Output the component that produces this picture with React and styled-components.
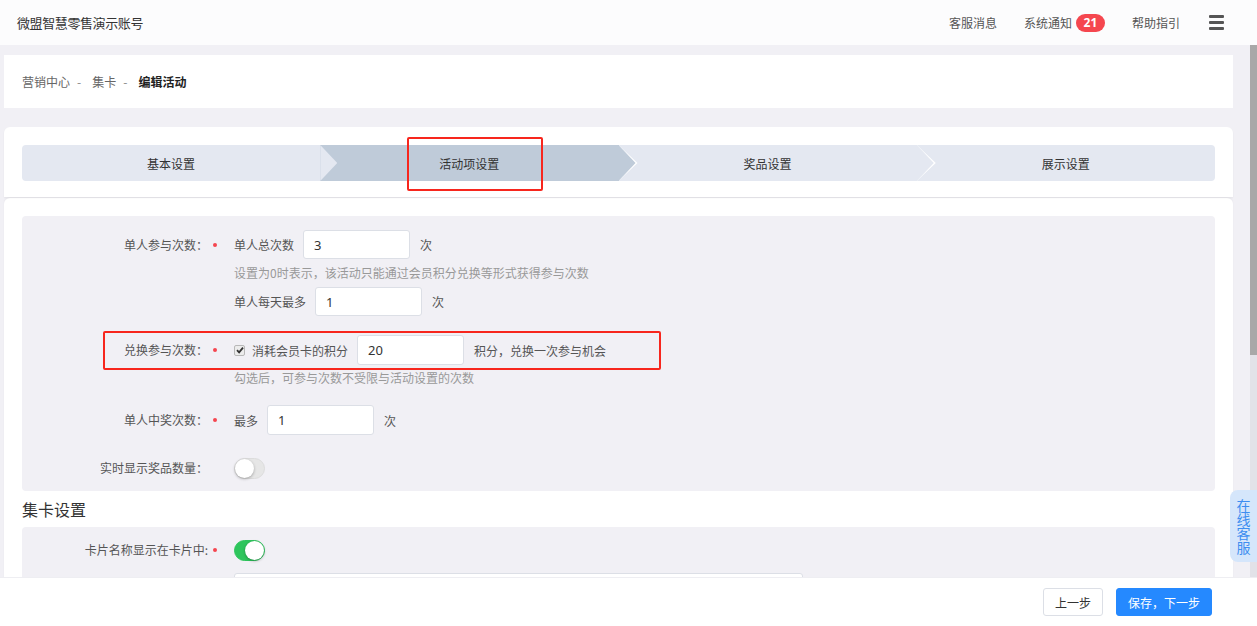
import React from 'react'
import styled, { createGlobalStyle } from 'styled-components'

const GlobalStyle = createGlobalStyle`
  html, body {
    margin: 0;
    padding: 0;
    height: 100%;
    overflow: hidden;
  }
  body {
    font-family: "Noto Sans CJK SC", "Noto Sans", sans-serif;
    font-size: 12px;
    color: #333;
    background: #f1f0f5;
  }
  * { box-sizing: border-box; }
`

const Shell = styled.div`
  display: flex;
  flex-direction: column;
  height: 100vh;
`
const Header = styled.header`
  flex: 0 0 45px;
  display: flex;
  align-items: center;
  justify-content: space-between;
  padding: 0 33px 0 17px;
  background: #fcfcfd;
`
const Brand = styled.div`
  font-size: 13px;
  color: #333;
  letter-spacing: -0.4px;
`
const NavLinks = styled.nav`
  display: flex;
  align-items: center;
`
const NavItem = styled.span`
  display: flex;
  align-items: center;
  margin-left: 27px;
  color: #555;
  font-size: 12px;
`
const Badge = styled.span`
  margin-left: 4px;
  height: 18px;
  min-width: 29px;
  padding: 0 6px;
  border-radius: 9px;
  background: #f5474f;
  color: #fff;
  font-family: "Noto Sans", sans-serif;
  font-weight: 700;
  font-size: 12px;
  line-height: 18px;
  text-align: center;
`
const Burger = styled.span`
  margin-left: 29px;
  display: flex;
  flex-direction: column;
  gap: 3px;
  width: 15px;
  span {
    height: 3px;
    background: #555;
    border-radius: 1px;
  }
`

const Scroller = styled.main`
  position: relative;
  flex: 1;
  overflow: hidden;
`
const Rail = styled.div`
  position: absolute;
  top: 0;
  right: 0;
  bottom: 0;
  width: 7px;
  background: #e2e2e8;
  z-index: 4;
  &::before {
    content: '';
    display: block;
    height: 310px;
    background: #a8a8a8;
  }
`
const Page = styled.div`
  min-height: 1089px;
  padding: 10px 24px 60px 4px;
`
const Crumbs = styled.div`
  height: 53px;
  display: flex;
  align-items: center;
  padding-left: 18px;
  background: #fff;
  color: #666;
  margin-bottom: 19px;
`
const Sep = styled.span`
  margin: 0 11px 0 7px;
  color: #888;
`
const Current = styled.span`
  color: #222;
  font-weight: 700;
`

const StepsCard = styled.div`
  position: relative;
  background: #fff;
  border-radius: 6px 6px 0 0;
  padding: 18px 18px 16px;
  box-shadow: 0 1px 2px rgba(0, 0, 0, 0.05);
`
const StepBar = styled.div`
  display: flex;
  height: 36px;
  border-radius: 4px;
  overflow: hidden;
`
const Step = styled.div`
  position: relative;
  flex: 1;
  display: flex;
  align-items: center;
  justify-content: center;
  background: ${props => props.$active ? '#bfcbd9' : '#e4e8f1'};
  color: #333;
  font-size: 12px;
  &::before {
    content: ${props => props.$last ? 'none' : "''"};
    position: absolute;
    z-index: 1;
    top: 0;
    right: -19px;
    width: 19px;
    height: 36px;
    background: ${props => props.$line ? '#fff' : 'transparent'};
    clip-path: polygon(0 0, 100% 50%, 0 100%);
  }
  &::after {
    content: ${props => props.$last ? 'none' : "''"};
    position: absolute;
    z-index: 2;
    top: 0;
    right: -17px;
    width: 17px;
    height: 36px;
    background: ${props => props.$active ? '#bfcbd9' : '#e4e8f1'};
    clip-path: polygon(0 0, 100% 50%, 0 100%);
  }
  span { position: relative; z-index: 3; }
`
const Highlight = styled.div`
  position: absolute;
  left: ${props => props.$x}px;
  top: ${props => props.$y}px;
  width: ${props => props.$w}px;
  height: ${props => props.$h}px;
  border: 2px solid #f7261d;
  border-radius: 2px;
  pointer-events: none;
  z-index: 5;
`

const FormCard = styled.div`
  margin-top: 1px;
  background: #fff;
  border-radius: 6px 6px 0 0;
  padding: 18px 18px 40px;
  box-shadow: 0 -1px 2px rgba(0, 0, 0, 0.04);
`
const Section = styled.section`
  background: #f1f0f5;
  border-radius: 4px;
  padding: ${props => props.$pad || '14px 0 12px'};
`
const Row = styled.div`
  position: relative;
  display: flex;
  align-items: flex-start;
  margin-top: ${props => props.$mt || 0}px;
`
const Label = styled.div`
  width: 186px;
  height: ${props => props.$h || 29}px;
  line-height: ${props => props.$h || 29}px;
  text-align: right;
  color: #555;
  white-space: nowrap;
`
const Dot = styled.div`
  width: 26px;
  height: ${props => props.$h || 29}px;
  display: flex;
  align-items: center;
  &::before {
    content: ${props => props.$on ? "''" : 'none'};
    margin-left: 5px;
    width: 4px;
    height: 4px;
    border-radius: 50%;
    background: #f5454f;
  }
`
const Field = styled.div`
  display: flex;
  flex-direction: column;
`
const Line = styled.div`
  display: flex;
  align-items: center;
  height: ${props => props.$h || 29}px;
  color: #555;
`
const TextInput = styled.input`
  width: 107px;
  height: ${props => props.$h || 29}px;
  margin: 0 10px 0 9px;
  padding: 0 10px;
  border: 1px solid #dcdfe6;
  border-radius: 3px;
  background: #fff;
  font-family: "Noto Sans", sans-serif;
  font-size: 13px;
  color: #333;
  outline: none;
`
const Hint = styled.div`
  height: ${props => props.$h || 28}px;
  line-height: ${props => props.$h || 28}px;
  color: #999;
`
const Check = styled.span`
  width: 11px;
  height: 11px;
  margin-right: 7px;
  border: 1px solid #b8b8b8;
  border-radius: 2px;
  background: #ececec;
  display: flex;
  align-items: center;
  justify-content: center;
`
const Toggle = styled.span`
  position: relative;
  width: 31px;
  height: 21px;
  border-radius: 11px;
  background: ${props => props.$on ? '#2ec55c' : '#e6e6e6'};
  border: 1px solid ${props => props.$on ? '#2ec55c' : '#dcdcdc'};
  &::after {
    content: '';
    position: absolute;
    top: 0;
    left: ${props => props.$on ? '10px' : '0'};
    width: 19px;
    height: 19px;
    border-radius: 50%;
    background: #fff;
    box-shadow: 0 1px 3px rgba(0, 0, 0, 0.3);
  }
`
const Heading = styled.h3`
  margin: 0;
  height: 36px;
  line-height: 36px;
  font-size: 16px;
  font-weight: 400;
  color: #333;
`
const WideInput = styled.div`
  width: 569px;
  height: 32px;
  background: #fff;
  border: 1px solid #dcdfe6;
  border-radius: 3px;
`

const Footer = styled.footer`
  position: fixed;
  left: 0;
  right: 0;
  bottom: 0;
  height: 49px;
  display: flex;
  align-items: center;
  justify-content: flex-end;
  gap: 13px;
  padding-right: 45px;
  background: #fff;
  border-top: 1px solid #eeeef2;
  z-index: 10;
`
const Button = styled.button`
  height: 28px;
  padding: 0 11px;
  border-radius: 3px;
  border: 1px solid ${props => props.$primary ? '#2589ff' : '#dcdfe6'};
  background: ${props => props.$primary ? '#2589ff' : '#fff'};
  color: ${props => props.$primary ? '#fff' : '#333'};
  font-family: "Noto Sans CJK SC", sans-serif;
  font-size: 12px;
  cursor: pointer;
`
const ServiceTab = styled.div`
  position: fixed;
  right: 0;
  top: 490px;
  width: 27px;
  height: 72px;
  padding-top: 9px;
  border-radius: 8px 0 0 8px;
  background: #d5e6fb;
  color: #3d8ef0;
  font-size: 14px;
  line-height: 14px;
  writing-mode: vertical-lr;
  display: flex;
  align-items: center;
  z-index: 11;
`

const steps = ['基本设置', '活动项设置', '奖品设置', '展示设置']

export default function App() {
  const active = 1
  return (
    <Shell>
      <GlobalStyle />
      <Header>
        <Brand>微盟智慧零售演示账号</Brand>
        <NavLinks>
          <NavItem>客服消息</NavItem>
          <NavItem>系统通知<Badge>21</Badge></NavItem>
          <NavItem>帮助指引</NavItem>
          <Burger><span /><span /><span /></Burger>
        </NavLinks>
      </Header>
      <Scroller>
        <Page>
          <Crumbs>
            营销中心<Sep>-</Sep>集卡<Sep>-</Sep><Current>编辑活动</Current>
          </Crumbs>
          <StepsCard>
            <StepBar>
              {steps.map((s, i) => (
                <Step
                  key={s}
                  $active={i === active}
                  $last={i === steps.length - 1}
                  $line={i + 1 !== active}
                >
                  <span>{s}</span>
                </Step>
              ))}
            </StepBar>
            <Highlight $x={403} $y={10} $w={136} $h={54} />
          </StepsCard>
          <FormCard>
            <Section>
              <Row>
                <Label>单人参与次数：</Label>
                <Dot $on />
                <Field>
                  <Line>单人总次数<TextInput defaultValue="3" />次</Line>
                  <Hint>设置为0时表示，该活动只能通过会员积分兑换等形式获得参与次数</Hint>
                  <Line>单人每天最多<TextInput defaultValue="1" />次</Line>
                </Field>
              </Row>
              <Row $mt={19}>
                <Label $h={30}>兑换参与次数：</Label>
                <Dot $on $h={30} />
                <Field>
                  <Line $h={30}>
                    <Check>
                      <svg width="8" height="8" viewBox="0 0 8 8">
                        <path d="M1 4.2 L3.1 6.3 L7 1.6" fill="none" stroke="#333" strokeWidth="1.8" />
                      </svg>
                    </Check>
                    消耗会员卡的积分<TextInput $h={30} defaultValue="20" />积分，兑换一次参与机会
                  </Line>
                  <Hint $h={26}>勾选后，可参与次数不受限与活动设置的次数</Hint>
                </Field>
                <Highlight $x={81} $y={-4} $w={558} $h={39} />
              </Row>
              <Row $mt={14}>
                <Label $h={30}>单人中奖次数：</Label>
                <Dot $on $h={30} />
                <Line $h={30}>最多<TextInput $h={30} defaultValue="1" />次</Line>
              </Row>
              <Row $mt={22}>
                <Label $h={22}>实时显示奖品数量：</Label>
                <Dot $h={22} />
                <Line $h={22}><Toggle /></Line>
              </Row>
            </Section>
            <Heading>集卡设置</Heading>
            <Section $pad="12px 0 20px">
              <Row>
                <Label $h={22}>卡片名称显示在卡片中:</Label>
                <Dot $on $h={22} />
                <Line $h={22}><Toggle $on /></Line>
              </Row>
              <Row $mt={12}>
                <Label $h={32} />
                <Dot $h={32} />
                <WideInput />
              </Row>
            </Section>
          </FormCard>
        </Page>
        <Rail />
      </Scroller>
      <ServiceTab>在线客服</ServiceTab>
      <Footer>
        <Button>上一步</Button>
        <Button $primary>保存，下一步</Button>
      </Footer>
    </Shell>
  )
}
